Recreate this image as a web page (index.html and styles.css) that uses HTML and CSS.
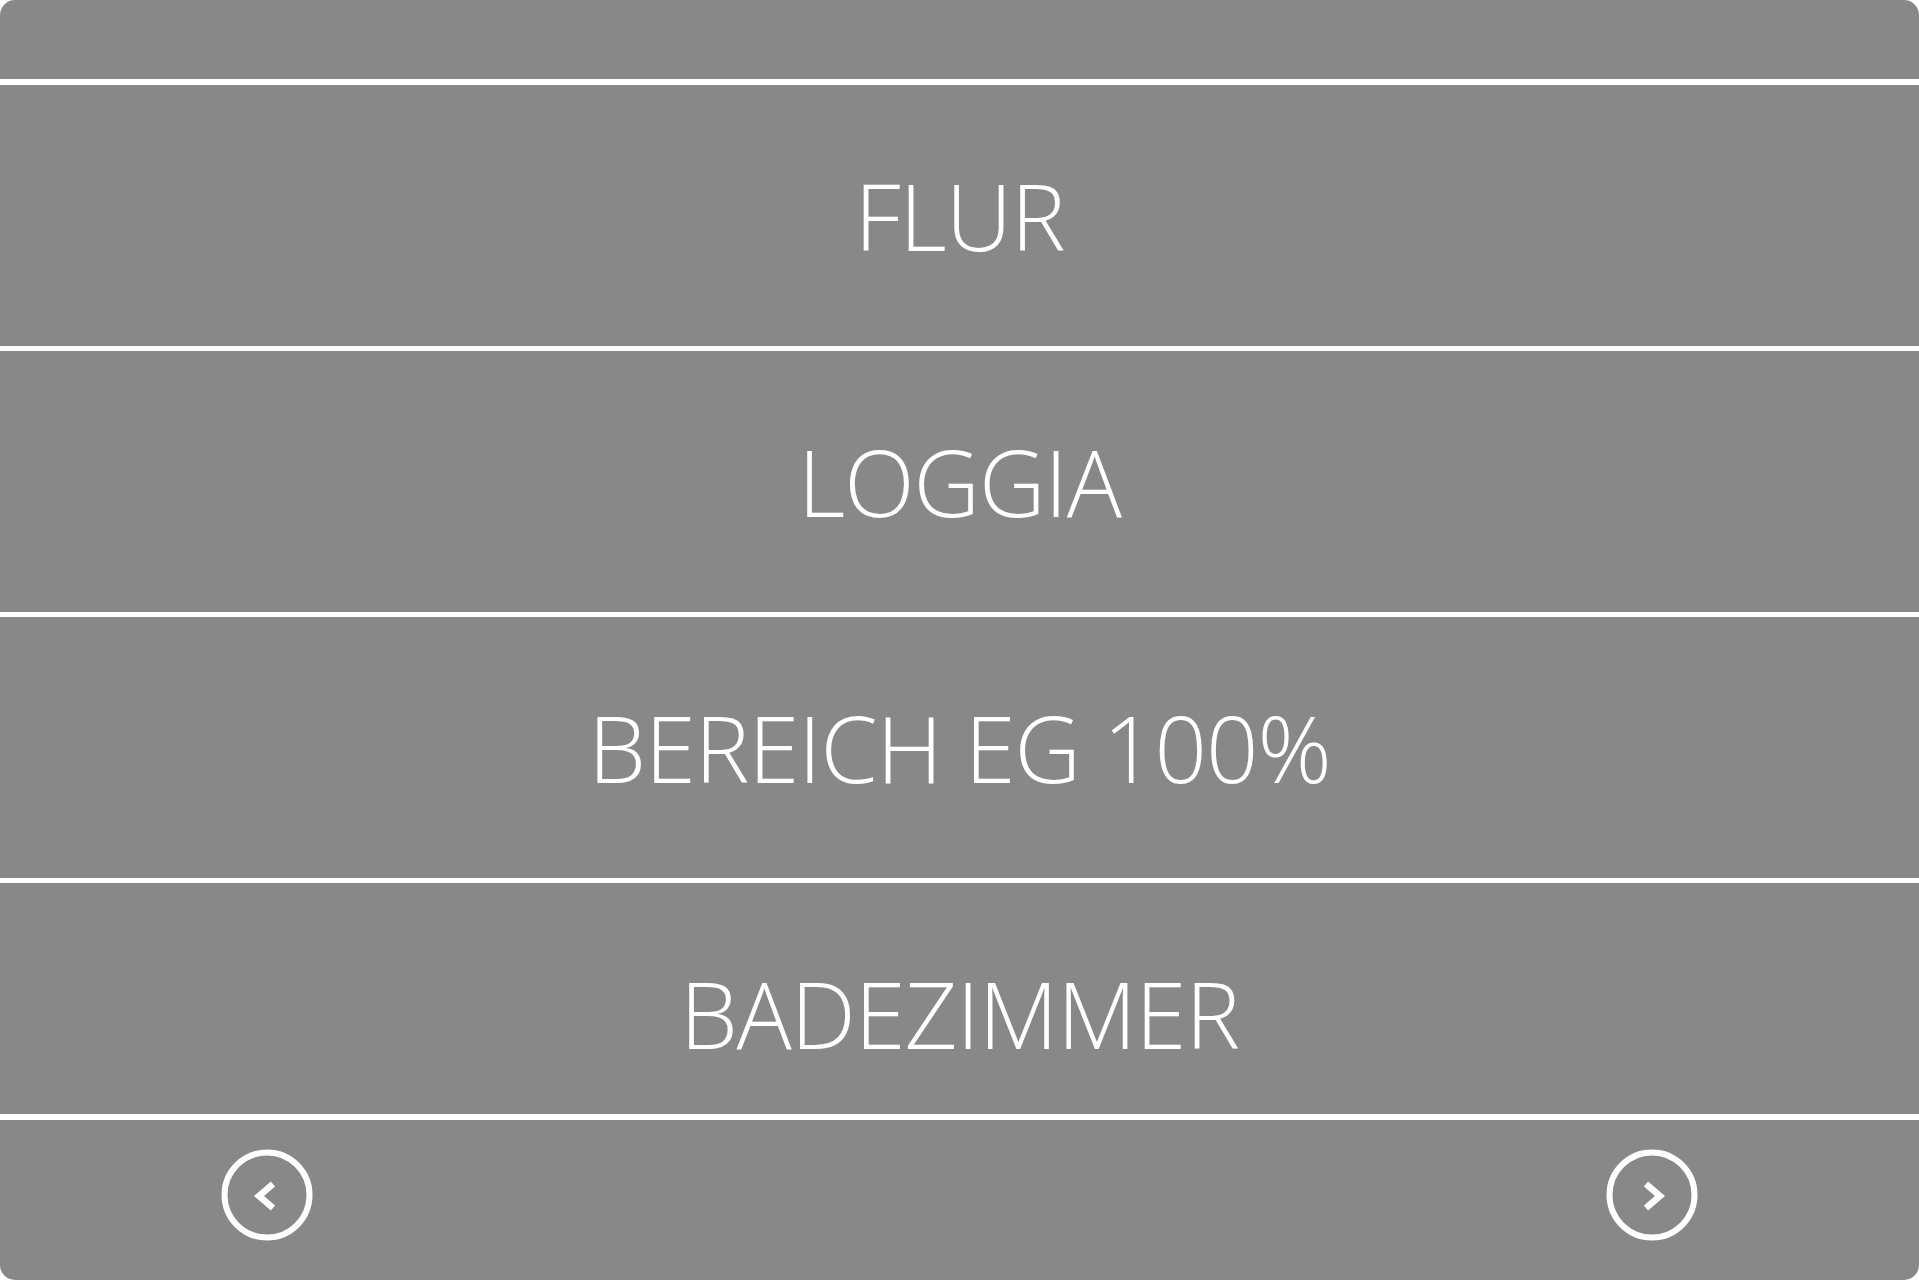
FILE: index.html
```html
<!DOCTYPE html>
<html lang="de">
  <head>
    <meta charset="UTF-8" />
    <meta name="viewport" content="width=device-width, initial-scale=1.0" />
    <title>Räume</title>
    <link rel="stylesheet" href="styles.css">
  </head>
  <body>
    <div class="panel">
      <div class="panel-header"></div>
      <div class="room-list">
        <div class="room">FLUR</div>
        <div class="room">LOGGIA</div>
        <div class="room">BEREICH EG 100%</div>
        <div class="room">BADEZIMMER</div>
      </div>
      <div class="panel-footer">
        <button class="nav-btn" aria-label="Zurück">
          <svg width="92" height="92" viewBox="0 0 92 92">
            <circle cx="46" cy="46" r="42.5" fill="none" stroke="#fff" stroke-width="6" />
            <path d="M52 35 L38 47 L52 59" fill="none" stroke="#fff" stroke-width="6.5" />
          </svg>
        </button>
        <button class="nav-btn" aria-label="Weiter">
          <svg width="92" height="92" viewBox="0 0 92 92">
            <circle cx="46" cy="46" r="42.5" fill="none" stroke="#fff" stroke-width="6" />
            <path d="M40 35 L54 47 L40 59" fill="none" stroke="#fff" stroke-width="6.5" />
          </svg>
        </button>
      </div>
    </div>
  </body>
</html>
```
FILE: styles.css
```css
body {
  margin: 0;
  background-color: #fff;
  font-family: "Open Sans", "Liberation Sans", sans-serif;
}
.panel {
  height: 1280px;
  display: flex;
  flex-direction: column;
  background-color: #888;
  border-radius: 15px;
  overflow: hidden;
  color: #fff;
}
.panel-header {
  height: 79px;
  flex-shrink: 0;
  border-bottom: 6px solid #fff;
}
.room-list {
  flex: 1;
  overflow: hidden;
}
.room {
  height: 266px;
  box-sizing: border-box;
  border-bottom: 5px solid #fff;
  display: flex;
  justify-content: center;
  align-items: center;
  font-size: 92px;
  font-weight: 300;
  letter-spacing: -1px;
}
.panel-footer {
  height: 166px;
  flex-shrink: 0;
  box-sizing: border-box;
  border-top: 6px solid #fff;
  padding: 29px 221px 0;
  display: flex;
  justify-content: space-between;
  align-items: flex-start;
}
.nav-btn {
  padding: 0;
  border: 0;
  background: none;
  cursor: pointer;
  line-height: 0;
}
```
